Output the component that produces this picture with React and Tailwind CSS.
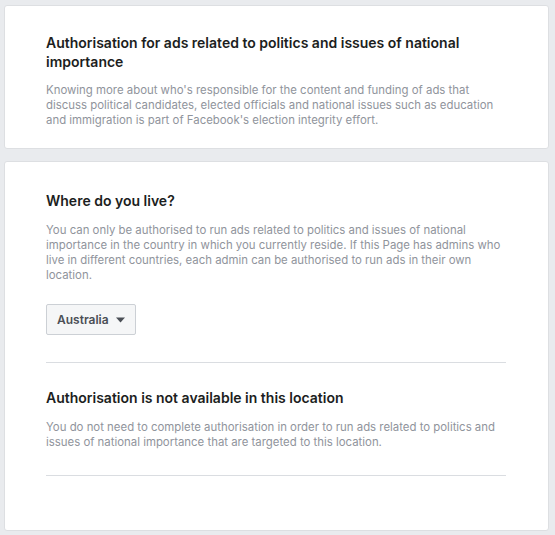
import React from 'react';

const font = { fontFamily: 'Inter, "Liberation Sans", Helvetica, Arial, sans-serif' };

const Divider = () => <div className="h-px bg-[#dadde1]" />;

export default function App() {
  return (
    <div className="min-h-screen bg-[#e9ebee] pt-[5px] pl-[4px] pr-[6px] pb-[5px]" style={font}>
      {/* Intro card */}
      <div className="bg-white border border-[#dddfe2] rounded-[3px] pl-[41px] pr-[42px] pt-[27px] pb-[20px]">
        <h1 className="text-[14px] leading-[19px] font-semibold text-[#1c1e21]">
          Authorisation for ads related to politics and issues of national importance
        </h1>
        <p className="mt-[12px] text-[11.4px] leading-[15px] text-[#90949c]">
          Knowing more about who's responsible for the content and funding of ads that discuss political
          candidates, elected officials and national issues such as education and immigration is part of
          Facebook's election integrity effort.
        </p>
      </div>

      {/* Location card */}
      <div className="mt-[12px] bg-white border border-[#dddfe2] rounded-[3px] pl-[41px] pr-[42px] pt-[29px] pb-[54px]">
        <h2 className="text-[14px] leading-[19px] font-semibold text-[#1c1e21]">Where do you live?</h2>
        <p className="mt-[13px] text-[11.4px] leading-[15px] text-[#90949c]">
          You can only be authorised to run ads related to politics and issues of national importance in the
          country in which you currently reside. If this Page has admins who live in different countries, each
          admin can be authorised to run ads in their own location.
        </p>
        <button className="mt-[21px] h-[31px] px-[10px] flex items-center gap-[7px] bg-[#f5f6f7] border border-[#ccd0d5] rounded-[2px] text-[12px] font-semibold text-[#4b4f56]">
          Australia
          <svg width="9" height="6" viewBox="0 0 9 6">
            <path d="M0 0.5 H9 L4.5 5.5 Z" fill="#4b4f56" />
          </svg>
        </button>

        <div className="mt-[27px]">
          <Divider />
        </div>

        <h2 className="mt-[25px] text-[14px] leading-[19px] font-semibold text-[#1c1e21]">
          Authorisation is not available in this location
        </h2>
        <p className="mt-[13px] text-[11.4px] leading-[15px] text-[#90949c]">
          You do not need to complete authorisation in order to run ads related to politics and issues of
          national importance that are targeted to this location.
        </p>

        <div className="mt-[25px]">
          <Divider />
        </div>
      </div>
    </div>
  );
}
